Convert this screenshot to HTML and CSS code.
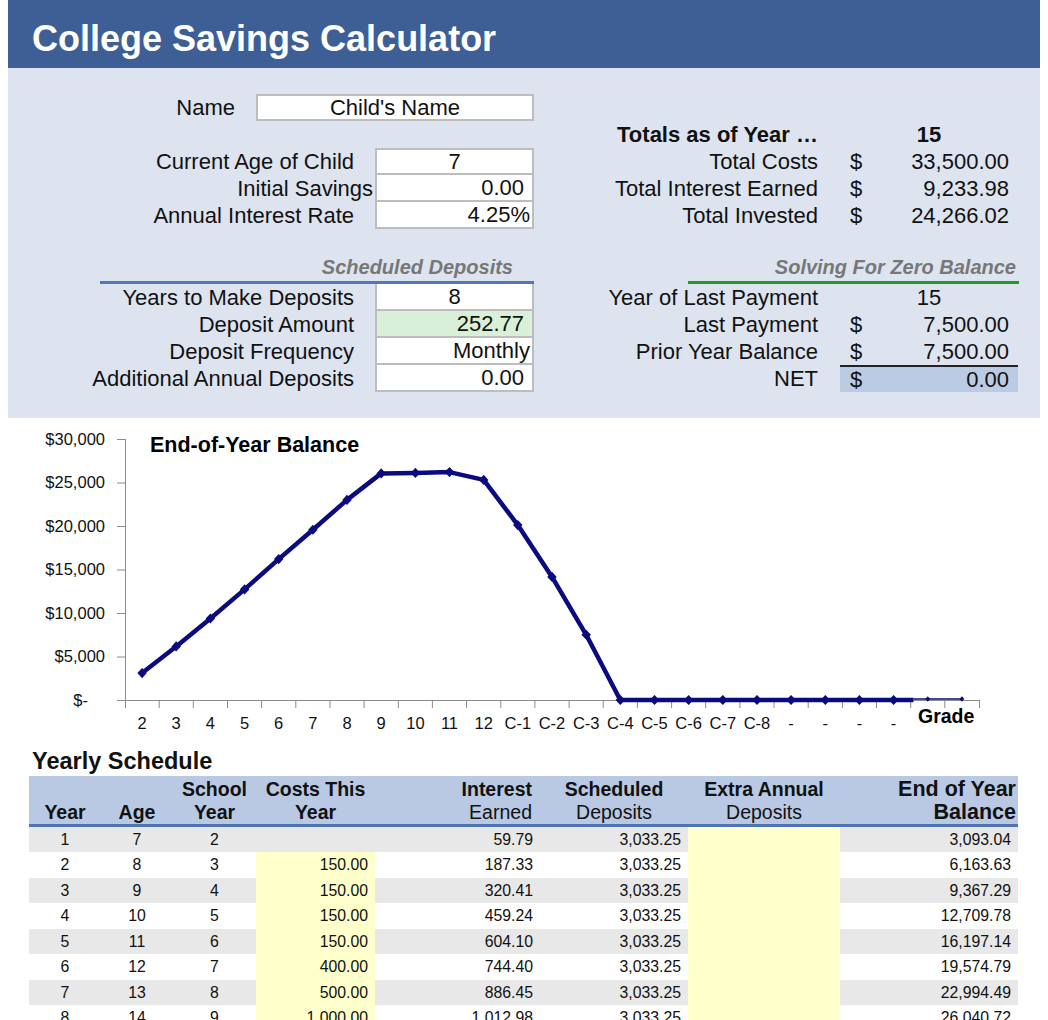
FILE: index.html
```html
<!DOCTYPE html>
<html lang="en">
<head>
  <meta charset="UTF-8">
  <title>College Savings Calculator</title>
  <link rel="stylesheet" href="styles.css">
</head>
<body>
  <header class="title-bar">
    <h1>College Savings Calculator</h1>
  </header>

  <section class="panel">
    <div class="inputs">
      <div class="group">
        <div class="row name-row">
          <span class="label">Name</span>
          <span class="box boxed center">Child's Name</span>
        </div>
        <div class="row"></div>
        <div class="row">
          <span class="label">Current Age of Child</span>
          <span class="box first center">7</span>
        </div>
        <div class="row">
          <span class="label tight">Initial Savings</span>
          <span class="box num">0.00</span>
        </div>
        <div class="row">
          <span class="label">Annual Interest Rate</span>
          <span class="box num snug">4.25%</span>
        </div>
      </div>

      <div class="group">
        <div class="section-title">Scheduled Deposits</div>
        <div class="rule blue"></div>
        <div class="row">
          <span class="label">Years to Make Deposits</span>
          <span class="box center">8</span>
        </div>
        <div class="row">
          <span class="label">Deposit Amount</span>
          <span class="box num solved">252.77</span>
        </div>
        <div class="row">
          <span class="label">Deposit Frequency</span>
          <span class="box num snug">Monthly</span>
        </div>
        <div class="row">
          <span class="label">Additional Annual Deposits</span>
          <span class="box num">0.00</span>
        </div>
      </div>
    </div>

    <div class="results">
      <div class="group">
        <div class="res-row"></div>
        <div class="res-row strong">
          <span class="label">Totals as of Year &hellip;</span>
          <span class="both">15</span>
        </div>
        <div class="res-row">
          <span class="label">Total Costs</span>
          <span class="cur">$</span>
          <span class="amt">33,500.00</span>
        </div>
        <div class="res-row">
          <span class="label">Total Interest Earned</span>
          <span class="cur">$</span>
          <span class="amt">9,233.98</span>
        </div>
        <div class="res-row">
          <span class="label">Total Invested</span>
          <span class="cur">$</span>
          <span class="amt">24,266.02</span>
        </div>
      </div>

      <div class="group">
        <div class="section-title">Solving For Zero Balance</div>
        <div class="rule green"></div>
        <div class="res-row">
          <span class="label">Year of Last Payment</span>
          <span class="both">15</span>
        </div>
        <div class="res-row">
          <span class="label">Last Payment</span>
          <span class="cur">$</span>
          <span class="amt">7,500.00</span>
        </div>
        <div class="res-row">
          <span class="label">Prior Year Balance</span>
          <span class="cur">$</span>
          <span class="amt">7,500.00</span>
        </div>
        <div class="res-row net">
          <span class="label">NET</span>
          <span class="cur">$</span>
          <span class="amt">0.00</span>
        </div>
      </div>
    </div>
  </section>

  <svg class="chart" width="1032" height="331" viewBox="0 0 1032 331">
    <defs>
      <marker id="pt" viewBox="-5 -5 10 10" markerUnits="userSpaceOnUse" markerWidth="11" markerHeight="11">
        <path d="M0 -4.6 L4.3 0 L0 4.6 L-4.3 0Z" fill="#0b0b80"/>
      </marker>
      <marker id="pt-small" viewBox="-5 -5 10 10" markerUnits="userSpaceOnUse" markerWidth="6" markerHeight="6">
        <path d="M0 -4.5 L4 0 L0 4.5 L-4 0Z" fill="#0b0b80"/>
      </marker>
    </defs>

    <text class="chart-title" x="142" y="34">End-of-Year Balance</text>

    <g class="y-labels">
      <text x="97" y="26.5">$30,000</text>
      <text x="97" y="70">$25,000</text>
      <text x="97" y="113.5">$20,000</text>
      <text x="97" y="157">$15,000</text>
      <text x="97" y="200.5">$10,000</text>
      <text x="97" y="244">$5,000</text>
      <text x="80" y="287.5">$-</text>
    </g>

    <!-- axes and ticks -->
    <path class="axis" d="M117.5 21 V290 M109 21.5 H117 M109 65 H117 M109 108.5 H117 M109 152 H117 M109 195.5 H117 M109 239 H117 M109 282.5 H972"/>
    <path class="axis" d="M117.5 282 V290 M151.2 282 V290 M185.3 282 V290 M219.5 282 V290 M253.6 282 V290 M287.8 282 V290 M322 282 V290 M356.1 282 V290 M390.3 282 V290 M424.4 282 V290 M458.6 282 V290 M492.8 282 V290 M526.9 282 V290 M561.1 282 V290 M595.2 282 V290 M629.4 282 V290 M663.6 282 V290 M697.7 282 V290 M731.9 282 V290 M766 282 V290 M800.2 282 V290 M834.4 282 V290 M868.5 282 V290 M902.7 282 V290 M936.8 282 V290 M971.5 282 V290"/>

    <g class="x-labels">
      <text x="134.1" y="311">2</text>
      <text x="168.2" y="311">3</text>
      <text x="202.4" y="311">4</text>
      <text x="236.6" y="311">5</text>
      <text x="270.7" y="311">6</text>
      <text x="304.9" y="311">7</text>
      <text x="339" y="311">8</text>
      <text x="373.2" y="311">9</text>
      <text x="407.4" y="311">10</text>
      <text x="441.5" y="311">11</text>
      <text x="475.7" y="311">12</text>
      <text x="509.8" y="311">C-1</text>
      <text x="544" y="311">C-2</text>
      <text x="578.2" y="311">C-3</text>
      <text x="612.3" y="311">C-4</text>
      <text x="646.5" y="311">C-5</text>
      <text x="680.6" y="311">C-6</text>
      <text x="714.8" y="311">C-7</text>
      <text x="749" y="311">C-8</text>
      <text x="783.1" y="311">-</text>
      <text x="817.3" y="311">-</text>
      <text x="851.4" y="311">-</text>
      <text x="885.6" y="311">-</text>
    </g>

    <!-- balance series -->
    <polyline class="series" marker-start="url(#pt)" marker-mid="url(#pt)" marker-end="url(#pt)"
      points="134.1,255.1 168.2,228.4 202.4,200.5 236.6,171.4 270.7,141.1 304.9,111.7 339,81.9 373.2,55.4 407.4,54.9 441.5,54.1 475.7,61.9 509.8,107.1 544,158.9 578.2,216.8 612.3,282 646.5,282 680.6,282 714.8,282 749,282 783.1,282 817.3,282 851.4,282 885.6,282"/>
    <polyline class="series" points="885.6,282 905.5,282"/>
    <polyline class="series thin" marker-mid="url(#pt-small)" marker-end="url(#pt-small)"
      points="905.5,281 919.8,281 953.9,281"/>

    <text class="axis-title" x="910" y="305">Grade</text>
  </svg>

  <h2 class="schedule-title">Yearly Schedule</h2>

  <table class="schedule">
    <colgroup>
      <col style="width:72px">
      <col style="width:72px">
      <col style="width:83px">
      <col style="width:119px">
      <col style="width:165px">
      <col style="width:148px">
      <col style="width:152px">
      <col style="width:178px">
    </colgroup>
    <thead>
      <tr>
        <th>Year</th>
        <th>Age</th>
        <th>School<br>Year</th>
        <th>Costs This<br>Year</th>
        <th class="right">Interest<br><span class="plain">Earned</span></th>
        <th>Scheduled<br><span class="plain">Deposits</span></th>
        <th>Extra Annual<br><span class="plain">Deposits</span></th>
        <th class="right big">End of Year<br>Balance</th>
      </tr>
    </thead>
    <tbody>
      <tr><td>1</td><td>7</td><td>2</td><td class="num"></td><td class="num">59.79</td><td class="num">3,033.25</td><td class="extra"></td><td class="num">3,093.04</td></tr>
      <tr><td>2</td><td>8</td><td>3</td><td class="num cost">150.00</td><td class="num">187.33</td><td class="num">3,033.25</td><td class="extra"></td><td class="num">6,163.63</td></tr>
      <tr><td>3</td><td>9</td><td>4</td><td class="num cost">150.00</td><td class="num">320.41</td><td class="num">3,033.25</td><td class="extra"></td><td class="num">9,367.29</td></tr>
      <tr><td>4</td><td>10</td><td>5</td><td class="num cost">150.00</td><td class="num">459.24</td><td class="num">3,033.25</td><td class="extra"></td><td class="num">12,709.78</td></tr>
      <tr><td>5</td><td>11</td><td>6</td><td class="num cost">150.00</td><td class="num">604.10</td><td class="num">3,033.25</td><td class="extra"></td><td class="num">16,197.14</td></tr>
      <tr><td>6</td><td>12</td><td>7</td><td class="num cost">400.00</td><td class="num">744.40</td><td class="num">3,033.25</td><td class="extra"></td><td class="num">19,574.79</td></tr>
      <tr><td>7</td><td>13</td><td>8</td><td class="num cost">500.00</td><td class="num">886.45</td><td class="num">3,033.25</td><td class="extra"></td><td class="num">22,994.49</td></tr>
      <tr><td>8</td><td>14</td><td>9</td><td class="num cost">1,000.00</td><td class="num">1,012.98</td><td class="num">3,033.25</td><td class="extra"></td><td class="num">26,040.72</td></tr>
    </tbody>
  </table>
</body>
</html>
```

FILE: styles.css
```css
body {
  margin: 0 8px;
  font-family: "Liberation Sans", Arial, sans-serif;
  color: #111;
  background: #fff;
}

/* title bar */
.title-bar {
  height: 68px;
  box-sizing: border-box;
  padding: 9px 0 0 24px;
  display: flex;
  align-items: center;
  background: #3e5f96;
}
.title-bar h1 {
  margin: 0;
  font-size: 36px;
  font-weight: bold;
  color: #fff;
}

/* input / results panel */
.panel {
  display: flex;
  gap: 6px;
  height: 350px;
  box-sizing: border-box;
  padding: 26px 0 26px 0;
  background: #dde4ef;
  font-size: 22px;
}
.inputs {
  width: 526px;
}
.results {
  width: 478px;
}
.group + .group {
  margin-top: 25px;
}

.row {
  display: grid;
  grid-template-columns: 367px 159px;
  height: 27px;
  line-height: 27px;
}
.row.name-row {
  grid-template-columns: 248px 278px;
}
.label {
  text-align: right;
  padding-right: 21px;
  white-space: nowrap;
}
.label.tight {
  padding-right: 2px;
}

.box {
  box-sizing: border-box;
  height: 27px;
  line-height: 25px;
  background: #fff;
  border: 2px solid #bdbdbd;
  border-top: 0;
  white-space: nowrap;
}
.box.boxed,
.box.first {
  border-top: 2px solid #bdbdbd;
  line-height: 23px;
}
.box.center {
  text-align: center;
}
.box.num {
  text-align: right;
  padding-right: 8px;
}
.box.num.snug {
  padding-right: 2px;
}
.box.solved {
  background: #d7f0d7;
}

.section-title {
  height: 27px;
  line-height: 27px;
  text-align: right;
  padding-right: 21px;
  font-size: 20px;
  font-weight: bold;
  font-style: italic;
  color: #777;
}
.results .section-title {
  padding-right: 2px;
}
.rule {
  height: 3px;
}
.rule.blue {
  margin-left: 92px;
  background: #5277b8;
}
.rule.green {
  margin-left: 148px;
  margin-right: -1px;
  background: #1f9a2b;
}

.res-row {
  display: grid;
  grid-template-columns: 300px 30px 148px;
  height: 27px;
  line-height: 27px;
}
.res-row .label {
  padding-right: 22px;
}
.res-row .cur {
  padding-left: 10px;
}
.res-row .amt {
  text-align: right;
  padding-right: 9px;
}
.res-row .both {
  grid-column: 2 / 4;
  text-align: center;
}
.res-row.strong {
  font-weight: bold;
}
.res-row.net .cur,
.res-row.net .amt {
  background: #bccbe4;
  border-top: 2px solid #222;
  line-height: 25px;
}

/* chart */
.chart {
  display: block;
  font-family: "Liberation Sans", Arial, sans-serif;
}
.chart-title {
  font-size: 21.5px;
  font-weight: bold;
  fill: #000;
}
.y-labels text {
  font-size: 16.5px;
  text-anchor: end;
  fill: #111;
}
.x-labels text {
  font-size: 16.5px;
  text-anchor: middle;
  fill: #111;
}
.axis {
  fill: none;
  stroke: #8c8c8c;
  stroke-width: 1;
}
.series {
  fill: none;
  stroke: #0b0b80;
  stroke-width: 4.5;
  stroke-linejoin: round;
}
.series.thin {
  stroke-width: 1.5;
}
.axis-title {
  font-size: 19.5px;
  font-weight: bold;
  fill: #000;
}

/* yearly schedule table */
.schedule-title {
  margin: 0 0 3px 24px;
  font-size: 23.5px;
  line-height: 24px;
  font-weight: bold;
}
.schedule {
  width: 989px;
  margin-left: 21px;
  table-layout: fixed;
  border-collapse: collapse;
}
.schedule th {
  height: 49px;
  box-sizing: border-box;
  padding: 0 4px;
  vertical-align: bottom;
  background: #b9c9e3;
  border-bottom: 3px solid #4f74b4;
  font-size: 19.5px;
  line-height: 23px;
  font-weight: bold;
  text-align: center;
  white-space: nowrap;
}
.schedule th.right {
  text-align: right;
  padding-right: 8px;
}
.schedule th.big {
  font-size: 21.5px;
  padding-right: 2px;
}
.schedule th .plain {
  font-weight: normal;
}
.schedule td {
  height: 25.5px;
  padding: 0;
  font-size: 15.8px;
  line-height: 25px;
  text-align: center;
}
.schedule td.num {
  text-align: right;
  padding-right: 7px;
}
.schedule tbody tr:nth-child(odd) {
  background: #e8e8e8;
}
.schedule td.cost,
.schedule td.extra {
  background: #ffffcc;
}
```
